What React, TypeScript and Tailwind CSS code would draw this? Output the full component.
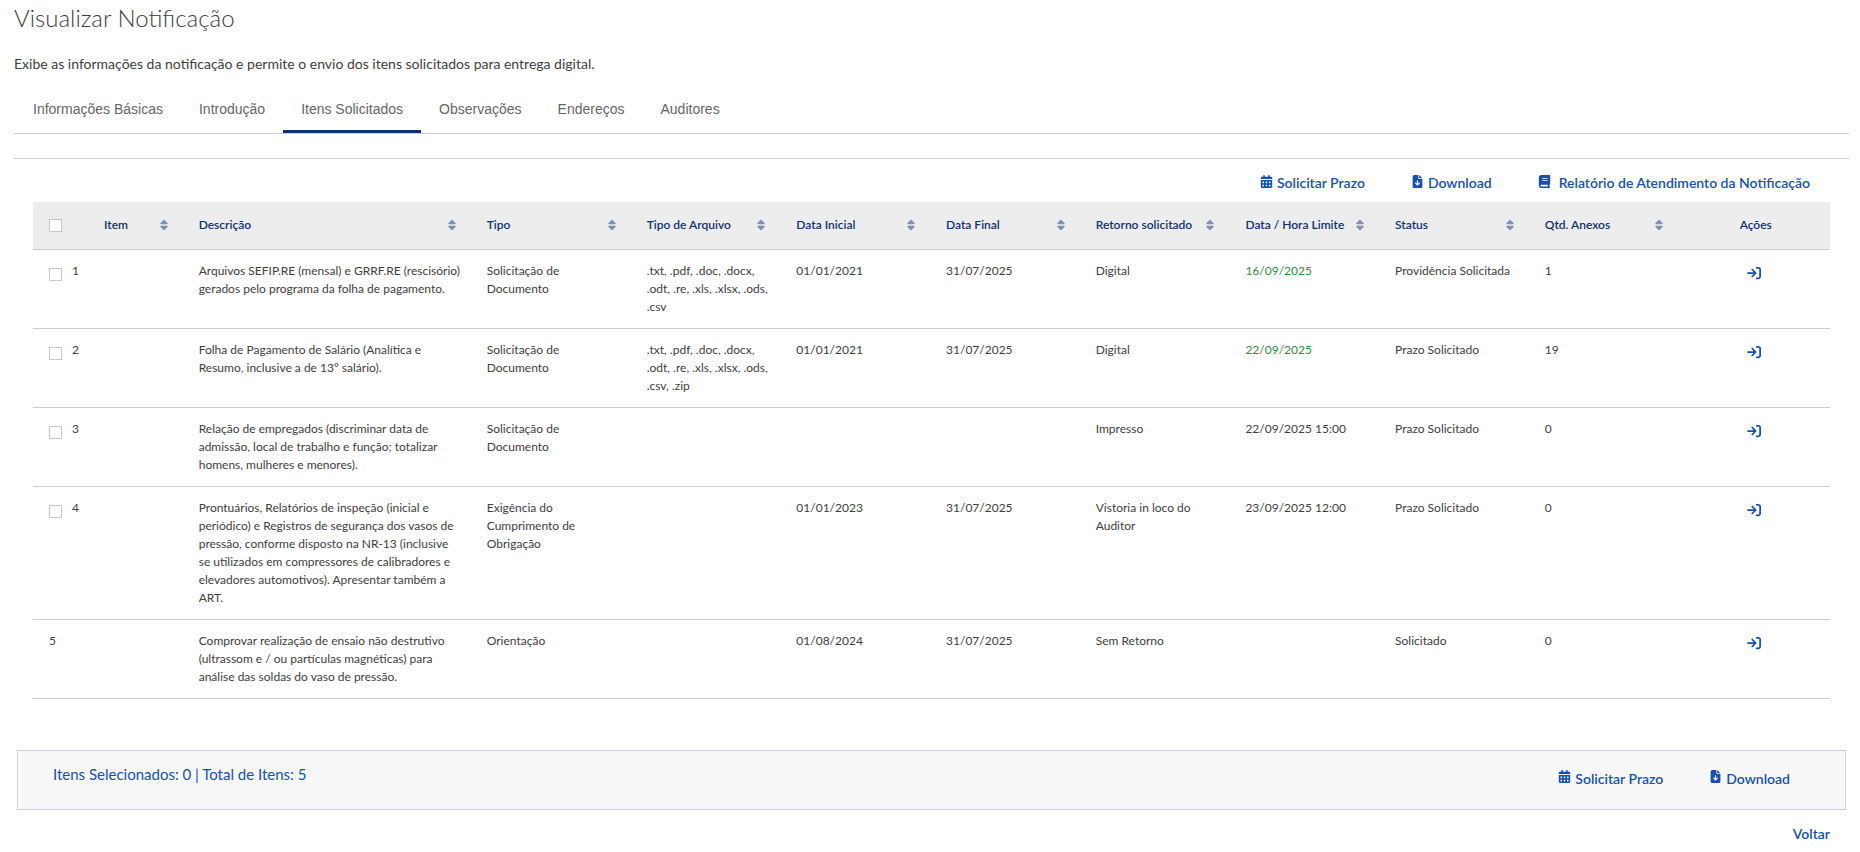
import React, { useState } from "react";
import {
  FaArrowRightToBracket,
  FaBook,
  FaCalendarDays,
  FaFileArrowDown,
  FaSort,
} from "react-icons/fa6";

type Row = {
  item: number;
  selectable: boolean;
  description: string;
  type: string;
  fileTypes: string;
  start: string;
  end: string;
  returnKind: string;
  deadline: string;
  onTime?: boolean;
  status: string;
  attachments: number;
};

const rows: Row[] = [
  {
    item: 1,
    selectable: true,
    description:
      "Arquivos SEFIP.RE (mensal) e GRRF.RE (rescisório)\ngerados pelo programa da folha de pagamento.",
    type: "Solicitação de\nDocumento",
    fileTypes: ".txt, .pdf, .doc, .docx,\n.odt, .re, .xls, .xlsx, .ods,\n.csv",
    start: "01/01/2021",
    end: "31/07/2025",
    returnKind: "Digital",
    deadline: "16/09/2025",
    onTime: true,
    status: "Providência Solicitada",
    attachments: 1,
  },
  {
    item: 2,
    selectable: true,
    description:
      "Folha de Pagamento de Salário (Analítica e\nResumo, inclusive a de 13º salário).",
    type: "Solicitação de\nDocumento",
    fileTypes: ".txt, .pdf, .doc, .docx,\n.odt, .re, .xls, .xlsx, .ods,\n.csv, .zip",
    start: "01/01/2021",
    end: "31/07/2025",
    returnKind: "Digital",
    deadline: "22/09/2025",
    onTime: true,
    status: "Prazo Solicitado",
    attachments: 19,
  },
  {
    item: 3,
    selectable: true,
    description:
      "Relação de empregados (discriminar data de\nadmissão, local de trabalho e função; totalizar\nhomens, mulheres e menores).",
    type: "Solicitação de\nDocumento",
    fileTypes: "",
    start: "",
    end: "",
    returnKind: "Impresso",
    deadline: "22/09/2025 15:00",
    status: "Prazo Solicitado",
    attachments: 0,
  },
  {
    item: 4,
    selectable: true,
    description:
      "Prontuários, Relatórios de inspeção (inicial e\nperiódico) e Registros de segurança dos vasos de\npressão, conforme disposto na NR-13 (inclusive\nse utilizados em compressores de calibradores e\nelevadores automotivos). Apresentar também a\nART.",
    type: "Exigência do\nCumprimento de\nObrigação",
    fileTypes: "",
    start: "01/01/2023",
    end: "31/07/2025",
    returnKind: "Vistoria in loco do\nAuditor",
    deadline: "23/09/2025 12:00",
    status: "Prazo Solicitado",
    attachments: 0,
  },
  {
    item: 5,
    selectable: false,
    description:
      "Comprovar realização de ensaio não destrutivo\n(ultrassom e / ou partículas magnéticas) para\nanálise das soldas do vaso de pressão.",
    type: "Orientação",
    fileTypes: "",
    start: "01/08/2024",
    end: "31/07/2025",
    returnKind: "Sem Retorno",
    deadline: "",
    status: "Solicitado",
    attachments: 0,
  },
];

const tabs = [
  "Informações Básicas",
  "Introdução",
  "Itens Solicitados",
  "Observações",
  "Endereços",
  "Auditores",
];

const sortableHeaders = [
  { label: "Descrição", width: "w-[16.03%]" },
  { label: "Tipo", width: "w-[8.9%]" },
  { label: "Tipo de Arquivo", width: "w-[8.33%]" },
  { label: "Data Inicial", width: "w-[8.33%]" },
  { label: "Data Final", width: "w-[8.33%]" },
  { label: "Retorno solicitado", width: "w-[8.33%]" },
  { label: "Data / Hora Limite", width: "w-[8.33%]" },
  { label: "Status", width: "w-[8.33%]" },
  { label: "Qtd. Anexos", width: "w-[8.33%]" },
];

const checkboxClass =
  "size-[13px] shrink-0 cursor-pointer appearance-none border border-[#c8c8c8] bg-white checked:border-[#1351b4] checked:bg-[#1351b4]";
const actionClass =
  "flex cursor-pointer items-center gap-1 text-sm leading-5 font-semibold text-[#1351b4]";

function SortHeader({ label }: { label: string }) {
  return (
    <button
      type="button"
      className="flex w-full cursor-pointer items-center justify-between whitespace-nowrap"
    >
      {label}
      <FaSort className="size-3 text-[#7f91b5]" aria-hidden />
    </button>
  );
}

function RequestActions() {
  return (
    <>
      <button type="button" className={actionClass}>
        <FaCalendarDays className="mb-1 size-[13px]" aria-hidden />
        Solicitar Prazo
      </button>
      <button type="button" className={actionClass}>
        <FaFileArrowDown className="mb-1 size-[13px]" aria-hidden />
        Download
      </button>
    </>
  );
}

export default function App() {
  const [activeTab, setActiveTab] = useState("Itens Solicitados");
  const [selected, setSelected] = useState<number[]>([]);
  const selectable = rows.filter((r) => r.selectable).map((r) => r.item);

  const toggle = (item: number) =>
    setSelected((s) => (s.includes(item) ? s.filter((i) => i !== item) : [...s, item]));
  const toggleAll = () =>
    setSelected((s) => (s.length === selectable.length ? [] : selectable));

  return (
    <main className="bg-white pt-1 pr-[11px] pb-2 pl-[14px] font-['Lato',sans-serif] text-[#404040]">
      <h1 className="text-2xl leading-7 font-light">Visualizar Notificação</h1>
      <p className="mt-[22px] text-sm leading-5">
        Exibe as informações da notificação e permite o envio dos itens solicitados para
        entrega digital.
      </p>

      <div
        role="tablist"
        className="mt-[13px] flex border-b border-[#cccccc] pl-px font-['Liberation_Sans',sans-serif] text-sm"
      >
        {tabs.map((tab) => (
          <button
            key={tab}
            type="button"
            role="tab"
            aria-selected={tab === activeTab}
            onClick={() => setActiveTab(tab)}
            className={
              "cursor-pointer border-b-[3px] px-[18px] pt-3 pb-[11px] leading-5 text-[#666666] " +
              (tab === activeTab ? "border-[#0c326f]" : "border-transparent")
            }
          >
            {tab}
          </button>
        ))}
      </div>

      <section className="mt-6 border-t border-[#cccccc] px-[19px]">
        <div className="flex justify-end gap-[46px] pt-[14px] pr-5 pb-[9px]">
          <RequestActions />
          <button
            type="button"
            className="flex cursor-pointer items-center gap-2 text-sm leading-5 font-semibold text-[#1351b4]"
          >
            <FaBook className="mb-1 size-[13px]" aria-hidden />
            Relatório de Atendimento da Notificação
          </button>
        </div>

        <table className="w-full table-fixed border-collapse text-left text-xs leading-[18px]">
          <thead>
            <tr className="h-[47px] border-b border-[#cccccc] bg-[#ededed] text-[#0c326f] [&>th]:pr-[13px] [&>th]:pl-4 [&>th]:font-semibold">
              <th className="w-[8.33%]">
                <div className="flex items-center gap-[42px]">
                  <input
                    type="checkbox"
                    aria-label="Selecionar todos"
                    className={checkboxClass}
                    checked={selected.length === selectable.length}
                    onChange={toggleAll}
                  />
                  <SortHeader label="Item" />
                </div>
              </th>
              {sortableHeaders.map((h) => (
                <th key={h.label} className={h.width}>
                  <SortHeader label={h.label} />
                </th>
              ))}
              <th className="text-center">Ações</th>
            </tr>
          </thead>
          <tbody>
            {rows.map((r) => (
              <tr
                key={r.item}
                className="border-b border-[#cccccc] align-top whitespace-pre [&>td]:py-3 [&>td]:pl-4"
              >
                <td>
                  {r.selectable ? (
                    <label className="flex items-start gap-[10px]">
                      <input
                        type="checkbox"
                        className={checkboxClass + " mt-[6px]"}
                        checked={selected.includes(r.item)}
                        onChange={() => toggle(r.item)}
                      />
                      {r.item}
                    </label>
                  ) : (
                    r.item
                  )}
                </td>
                <td>{r.description}</td>
                <td>{r.type}</td>
                <td>{r.fileTypes}</td>
                <td>{r.start}</td>
                <td>{r.end}</td>
                <td>{r.returnKind}</td>
                <td className={r.onTime ? "text-[#2a8f3e]" : ""}>{r.deadline}</td>
                <td>{r.status}</td>
                <td>{r.attachments}</td>
                <td className="pr-4">
                  <button
                    type="button"
                    aria-label={"Abrir item " + r.item}
                    className="mx-auto mt-1 block cursor-pointer text-[#1351b4]"
                  >
                    <FaArrowRightToBracket className="size-[14px]" aria-hidden />
                  </button>
                </td>
              </tr>
            ))}
          </tbody>
        </table>
      </section>

      <footer className="pr-[3px] pl-[3px]">
        <div className="mt-[51px] flex justify-between border border-[#c5d4eb] bg-[#f8f8f8] pt-[13px] pr-[55px] pb-5 pl-[35px]">
          <p className="text-[15px] leading-5 text-[#1351b4]">
            Itens Selecionados: {selected.length} | Total de Itens: {rows.length}
          </p>
          <div className="flex gap-[46px] pt-[5px]">
            <RequestActions />
          </div>
        </div>
        <div className="mt-[14px] flex justify-end pr-4">
          <a href="#voltar" className="text-sm leading-5 font-semibold text-[#1351b4]">
            Voltar
          </a>
        </div>
      </footer>
    </main>
  );
}
